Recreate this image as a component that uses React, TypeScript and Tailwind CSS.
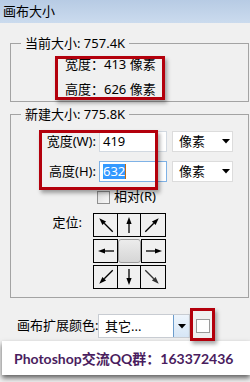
import React from "react";

const font = "font-['Noto_Sans','Noto_Sans_CJK_SC',sans-serif]";

function Arrow({ dx, dy, len = 16, color = "#000" }: { dx: number; dy: number; len?: number; color?: string }) {
    const c = 11;
    const n = Math.hypot(dx, dy);
    const ux = dx / n;
    const uy = dy / n;
    const tip = [c + (ux * len) / 2, c + (uy * len) / 2];
    const tail = [c - (ux * len) / 2, c - (uy * len) / 2];
    const base = [tip[0] - ux * 7, tip[1] - uy * 7];
    const px = -uy;
    const py = ux;
    const pts = `${tip[0]},${tip[1]} ${base[0] + px * 2.6},${base[1] + py * 2.6} ${base[0] - px * 2.6},${base[1] - py * 2.6}`;
    return (
        <svg width="22" height="22" viewBox="0 0 22 22">
            <line x1={tail[0]} y1={tail[1]} x2={base[0]} y2={base[1]} stroke={color} strokeWidth="1.3" />
            <polygon points={pts} fill={color} />
        </svg>
    );
}

function Caret() {
    return (
        <svg width="8" height="5" viewBox="0 0 8 5">
            <polygon points="0,0 8,0 4,4.5" fill="#000" />
        </svg>
    );
}

function UnitSelect() {
    return (
        <div className="ml-[5px] w-[61px] h-[21px] bg-white border border-[#dcdcdc] flex items-center justify-between pl-[6px] pr-[2px]">
            <span className="leading-[19px]">像素</span>
            <Caret />
        </div>
    );
}

const diag = 19;

export default function App() {
    return (
        <div className={`relative w-[250px] h-[382px] overflow-hidden bg-[#f0f0f0] text-[13px] text-black ${font}`}>
            <div className="h-[23px] bg-gradient-to-b from-[#b7cbe4] to-[#cbdbee] pl-[3px] leading-[23px]">画布大小</div>

            <fieldset className="ml-[10px] mt-[12px] w-[239px] border border-[#a3a3a3] pl-[10px] pb-[4px]">
                <legend className="px-[4px] leading-[16px]">当前大小: 757.4K</legend>
                <div className="ml-[44px] mt-[5px] leading-[16px]">宽度：413 像素</div>
                <div className="ml-[44px] mt-[9px] leading-[16px]">高度：626 像素</div>
            </fieldset>

            <fieldset className="ml-[10px] mt-[4px] w-[239px] border border-[#a3a3a3] pl-[10px] pb-[8px]">
                <legend className="px-[4px] leading-[16px]">新建大小: 775.8K</legend>
                <div className="flex items-center mt-[9px]">
                    <div className="w-[75px] text-right">宽度(W):</div>
                    <div className="ml-[3px] w-[68px] h-[21px] bg-white border border-[#d2d9e1] pl-[3px] leading-[19px]">419</div>
                    <UnitSelect />
                </div>
                <div className="flex items-center mt-[9px]">
                    <div className="w-[75px] text-right">高度(H):</div>
                    <div className="ml-[3px] w-[68px] h-[21px] bg-white border border-[#7fb2e6] pl-[3px] flex items-center">
                        <span className="bg-[#3399ff] text-white leading-[15px]">632</span>
                        <span className="w-[1px] h-[15px] bg-[#c06a10]" />
                    </div>
                    <UnitSelect />
                </div>
                <div className="flex items-center mt-[7px] ml-[76px] h-[16px]">
                    <div className="w-[13px] h-[13px] border border-[#8f8f8f] bg-gradient-to-br from-[#dcdcdc] to-[#f8f8f8]" />
                    <span className="ml-[4px]">相对(R)</span>
                </div>
                <div className="flex mt-[8px]">
                    <div className="w-[72px] text-right pr-[11px] leading-[16px] mt-[1px]">定位:</div>
                    <div className="flex flex-col gap-[2px]">
                        <div className="flex border border-black w-[73px] h-[24px]">
                            <div className="w-[23px] flex items-center justify-center"><Arrow dx={-1} dy={-1} len={diag} /></div>
                            <div className="w-[23px] border-l border-black flex items-center justify-center"><Arrow dx={0} dy={-1} /></div>
                            <div className="w-[23px] border-l border-black flex items-center justify-center"><Arrow dx={1} dy={-1} len={diag} /></div>
                        </div>
                        <div className="flex h-[24px]">
                            <div className="w-[25px] border border-black flex items-center justify-center"><Arrow dx={-1} dy={0} /></div>
                            <div className="w-[23px] rounded-[3px] border border-[#9a9a9a] bg-gradient-to-b from-[#ececec] to-[#d6d6d6]" />
                            <div className="w-[25px] border border-black flex items-center justify-center"><Arrow dx={1} dy={0} /></div>
                        </div>
                        <div className="flex border border-black w-[73px] h-[24px]">
                            <div className="w-[23px] flex items-center justify-center"><Arrow dx={-1} dy={1} len={diag} /></div>
                            <div className="w-[23px] border-l border-black flex items-center justify-center"><Arrow dx={0} dy={1} /></div>
                            <div className="w-[23px] border-l border-black flex items-center justify-center"><Arrow dx={1} dy={1} len={diag} color="#333" /></div>
                        </div>
                    </div>
                </div>
            </fieldset>

            <div className="flex items-center mt-[16px] ml-[17px] h-[24px]">
                <span className="w-[81px] shrink-0 whitespace-nowrap">画布扩展颜色:</span>
                <div className="w-[92px] h-[24px] flex bg-white border border-[#c8ccd2]">
                    <span className="flex-1 pl-[6px] leading-[22px]">其它...</span>
                    <div className="w-[16px] border-l border-[#6b9ccc] bg-gradient-to-b from-[#eef5fc] to-[#d6e6f6] flex items-center justify-center">
                        <Caret />
                    </div>
                </div>
                <div className="ml-[6px] w-[14px] h-[14px] border border-[#9a9a9a] bg-white" />
            </div>

            <div className="ml-[2px] mt-[3px] h-[34px] bg-white shadow-[0_3px_5px_rgba(0,0,0,0.6)] flex items-center pl-[12px] whitespace-nowrap font-['Lato','Noto_Sans_CJK_SC',sans-serif] text-[14px] font-bold text-[#4a1d5e]">
                Photoshop交流QQ群：163372436
            </div>

            <div className="absolute left-[55px] top-[56px] w-[110px] h-[44px] border-[3px] border-[#b3000c] shadow-[2px_3px_4px_rgba(0,0,0,0.35)]" />
            <div className="absolute left-[39px] top-[130px] w-[119px] h-[60px] border-[3px] border-[#b3000c] shadow-[2px_3px_4px_rgba(0,0,0,0.35)]" />
            <div className="absolute left-[190px] top-[308px] w-[25px] h-[33px] border-[3px] border-[#b3000c] shadow-[2px_3px_4px_rgba(0,0,0,0.35)]" />
        </div>
    );
}
